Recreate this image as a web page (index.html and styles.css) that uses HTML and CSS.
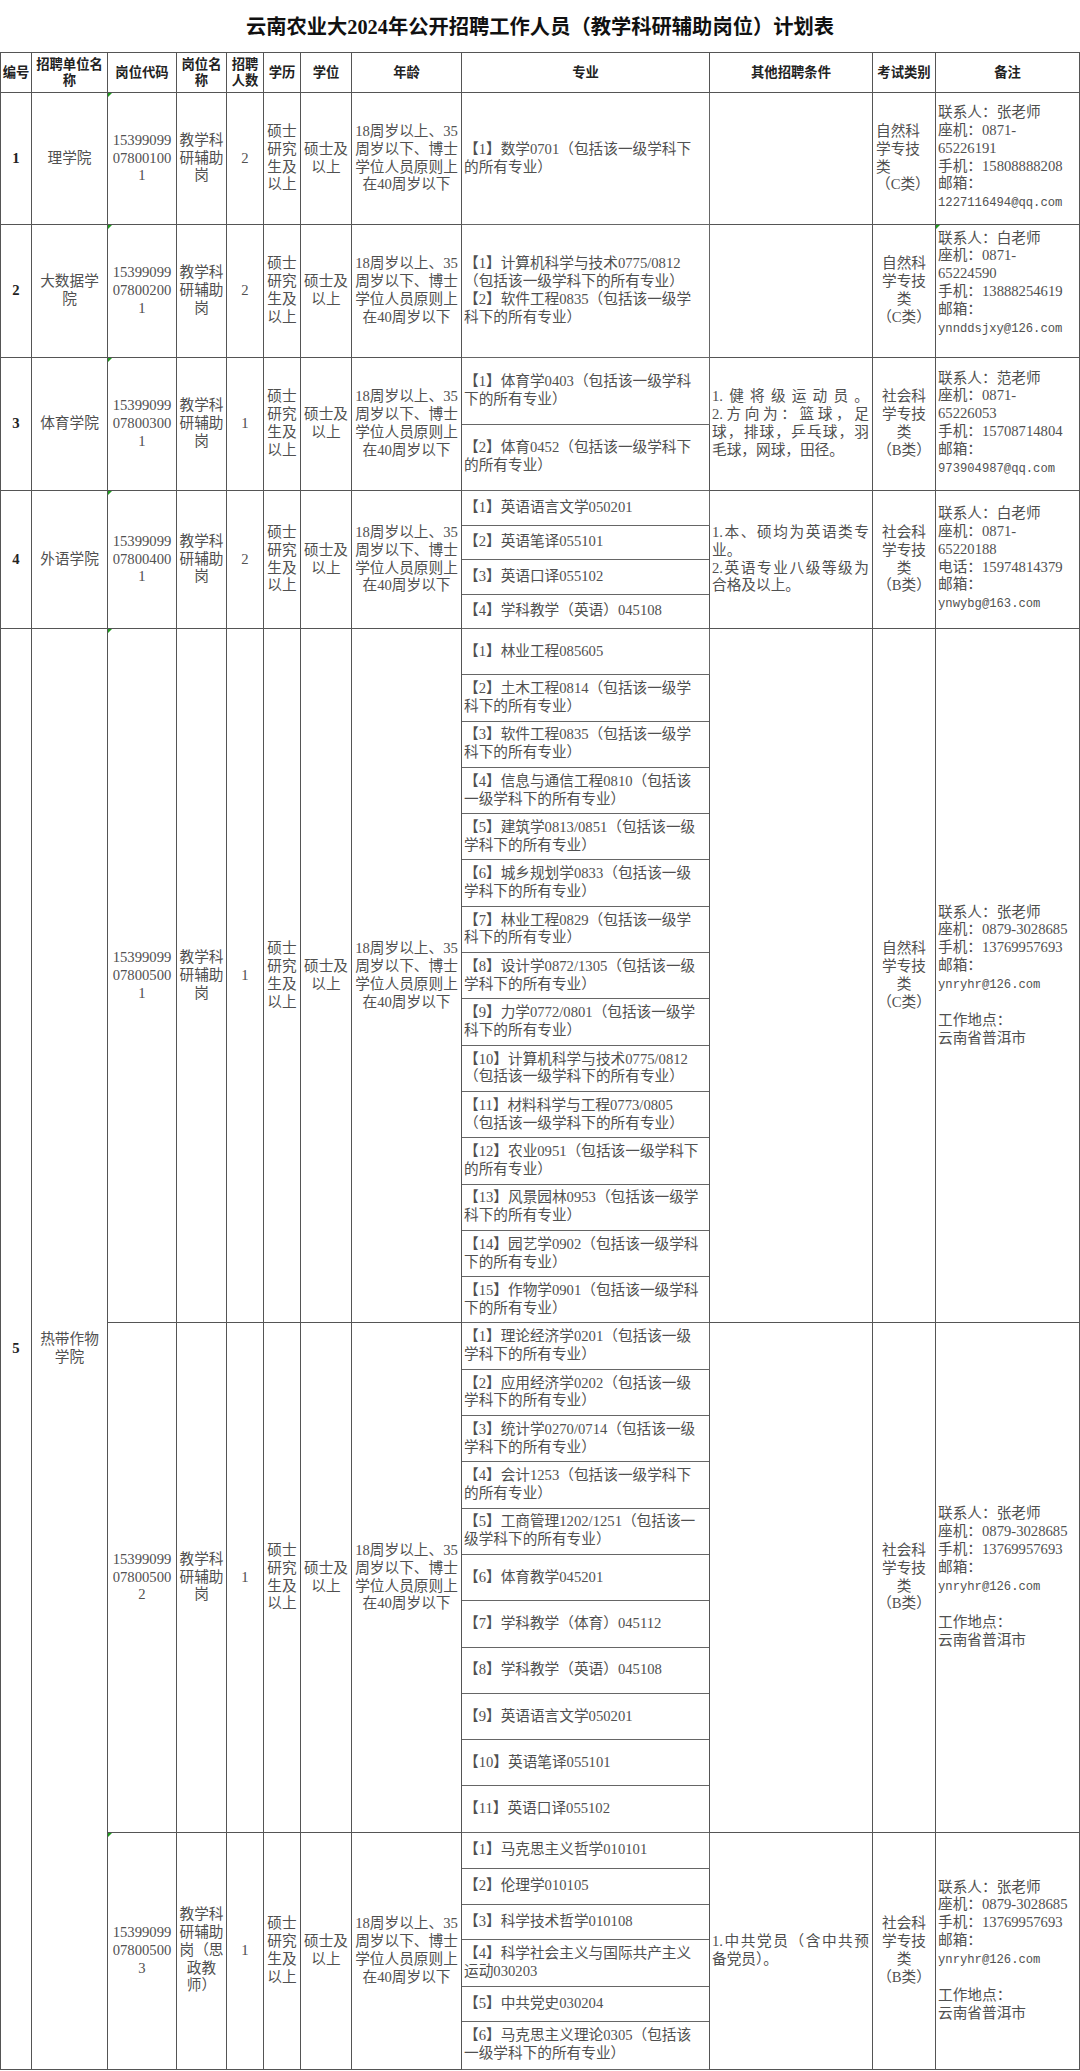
FILE: index.html
```html
<!DOCTYPE html>
<html lang="zh-CN">
<head>
<meta charset="utf-8">
<title>云南农业大2024年公开招聘工作人员（教学科研辅助岗位）计划表</title>
<link rel="stylesheet" href="styles.css">
</head>
<body>
<div class="title">云南农业大2024年公开招聘工作人员（教学科研辅助岗位）计划表</div>
<table class="plan">
<colgroup>
<col class="w-no"><col class="w-unit"><col class="w-code"><col class="w-name"><col class="w-num"><col class="w-edu"><col class="w-deg"><col class="w-age"><col class="w-major"><col class="w-other"><col class="w-exam"><col class="w-note">
</colgroup>
<thead>
<tr class="hd">
<th>编号</th><th>招聘单位名<br>称</th><th>岗位代码</th><th>岗位名<br>称</th><th>招聘<br>人数</th><th>学历</th><th>学位</th><th>年龄</th><th>专业</th><th>其他招聘条件</th><th>考试类别</th><th>备注</th>
</tr>
</thead>
<tbody>
<!-- 1 -->
<tr class="h132">
<td class="no">1</td>
<td>理学院</td>
<td class="flag">15399099<br>07800100<br>1</td>
<td>教学科<br>研辅助<br>岗</td>
<td>2</td>
<td>硕士<br>研究<br>生及<br>以上</td>
<td>硕士及<br>以上</td>
<td>18周岁以上、35<br>周岁以下、博士<br>学位人员原则上<br>在40周岁以下</td>
<td class="major">【1】数学0701（包括该一级学科下<br>的所有专业）</td>
<td class="other"></td>
<td class="left">自然科<br>学专技<br>类<br>（C类）</td>
<td class="note">联系人：张老师<br>座机：0871-<br>65226191<br>手机：15808888208<br>邮箱：<br><span class="mono">1227116494@qq.com</span></td>
</tr>
<!-- 2 -->
<tr class="h133">
<td class="no">2</td>
<td>大数据学<br>院</td>
<td class="flag">15399099<br>07800200<br>1</td>
<td>教学科<br>研辅助<br>岗</td>
<td>2</td>
<td>硕士<br>研究<br>生及<br>以上</td>
<td>硕士及<br>以上</td>
<td>18周岁以上、35<br>周岁以下、博士<br>学位人员原则上<br>在40周岁以下</td>
<td class="major">【1】计算机科学与技术0775/0812<br>（包括该一级学科下的所有专业）<br>【2】软件工程0835（包括该一级学<br>科下的所有专业）</td>
<td class="other"></td>
<td>自然科<br>学专技<br>类<br>（C类）</td>
<td class="note flag lift">联系人：白老师<br>座机：0871-<br>65224590<br>手机：13888254619<br>邮箱：<br><span class="mono">ynnddsjxy@126.com</span></td>
</tr>
<!-- 3 -->
<tr class="h665">
<td class="no" rowspan="2">3</td>
<td rowspan="2">体育学院</td>
<td class="flag" rowspan="2">15399099<br>07800300<br>1</td>
<td rowspan="2">教学科<br>研辅助<br>岗</td>
<td rowspan="2">1</td>
<td rowspan="2">硕士<br>研究<br>生及<br>以上</td>
<td rowspan="2">硕士及<br>以上</td>
<td rowspan="2">18周岁以上、35<br>周岁以下、博士<br>学位人员原则上<br>在40周岁以下</td>
<td class="major">【1】体育学0403（包括该一级学科<br>下的所有专业）</td>
<td class="other" rowspan="2"><div class="j">1.健将级运动员。</div><div class="j">2.方向为：篮球，足</div><div class="j">球，排球，乒乓球，羽</div><div>毛球，网球，田径。</div></td>
<td rowspan="2">社会科<br>学专技<br>类<br>（B类）</td>
<td class="note" rowspan="2">联系人：范老师<br>座机：0871-<br>65226053<br>手机：15708714804<br>邮箱：<br><span class="mono">973904987@qq.com</span></td>
</tr>
<tr class="h665"><td class="major">【2】体育0452（包括该一级学科下<br>的所有专业）</td></tr>
<!-- 4 -->
<tr class="h345">
<td class="no" rowspan="4">4</td>
<td rowspan="4">外语学院</td>
<td class="flag" rowspan="4">15399099<br>07800400<br>1</td>
<td rowspan="4">教学科<br>研辅助<br>岗</td>
<td rowspan="4">2</td>
<td rowspan="4">硕士<br>研究<br>生及<br>以上</td>
<td rowspan="4">硕士及<br>以上</td>
<td rowspan="4">18周岁以上、35<br>周岁以下、博士<br>学位人员原则上<br>在40周岁以下</td>
<td class="major">【1】英语语言文学050201</td>
<td class="other" rowspan="4"><div class="j">1.本、硕均为英语类专</div><div>业。</div><div class="j">2.英语专业八级等级为</div><div>合格及以上。</div></td>
<td rowspan="4">社会科<br>学专技<br>类<br>（B类）</td>
<td class="note" rowspan="4">联系人：白老师<br>座机：0871-<br>65220188<br>电话：15974814379<br>邮箱：<br><span class="mono">ynwybg@163.com</span></td>
</tr>
<tr class="h345"><td class="major">【2】英语笔译055101</td></tr>
<tr class="h345"><td class="major">【3】英语口译055102</td></tr>
<tr class="h345"><td class="major">【4】学科教学（英语）045108</td></tr>
<!-- 5a -->
<tr class="h463">
<td class="no" rowspan="32">5</td>
<td rowspan="32">热带作物<br>学院</td>
<td class="flag" rowspan="15">15399099<br>07800500<br>1</td>
<td rowspan="15">教学科<br>研辅助<br>岗</td>
<td rowspan="15">1</td>
<td rowspan="15">硕士<br>研究<br>生及<br>以上</td>
<td rowspan="15">硕士及<br>以上</td>
<td rowspan="15">18周岁以上、35<br>周岁以下、博士<br>学位人员原则上<br>在40周岁以下</td>
<td class="major">【1】林业工程085605</td>
<td class="other" rowspan="15"></td>
<td rowspan="15">自然科<br>学专技<br>类<br>（C类）</td>
<td class="note" rowspan="15">联系人：张老师<br>座机：0879-3028685<br>手机：13769957693<br>邮箱：<br><span class="mono">ynryhr@126.com</span><br><br>工作地点：<br>云南省普洱市</td>
</tr>
<tr class="h463"><td class="major">【2】土木工程0814（包括该一级学<br>科下的所有专业）</td></tr>
<tr class="h463"><td class="major">【3】软件工程0835（包括该一级学<br>科下的所有专业）</td></tr>
<tr class="h463"><td class="major">【4】信息与通信工程0810（包括该<br>一级学科下的所有专业）</td></tr>
<tr class="h463"><td class="major">【5】建筑学0813/0851（包括该一级<br>学科下的所有专业）</td></tr>
<tr class="h463"><td class="major">【6】城乡规划学0833（包括该一级<br>学科下的所有专业）</td></tr>
<tr class="h463"><td class="major">【7】林业工程0829（包括该一级学<br>科下的所有专业）</td></tr>
<tr class="h463"><td class="major">【8】设计学0872/1305（包括该一级<br>学科下的所有专业）</td></tr>
<tr class="h463"><td class="major">【9】力学0772/0801（包括该一级学<br>科下的所有专业）</td></tr>
<tr class="h463"><td class="major">【10】计算机科学与技术0775/0812<br>（包括该一级学科下的所有专业）</td></tr>
<tr class="h463"><td class="major">【11】材料科学与工程0773/0805<br>（包括该一级学科下的所有专业）</td></tr>
<tr class="h463"><td class="major">【12】农业0951（包括该一级学科下<br>的所有专业）</td></tr>
<tr class="h463"><td class="major">【13】风景园林0953（包括该一级学<br>科下的所有专业）</td></tr>
<tr class="h463"><td class="major">【14】园艺学0902（包括该一级学科<br>下的所有专业）</td></tr>
<tr class="h463"><td class="major">【15】作物学0901（包括该一级学科<br>下的所有专业）</td></tr>
<!-- 5b -->
<tr class="h463">
<td rowspan="11">15399099<br>07800500<br>2</td>
<td rowspan="11">教学科<br>研辅助<br>岗</td>
<td rowspan="11">1</td>
<td rowspan="11">硕士<br>研究<br>生及<br>以上</td>
<td rowspan="11">硕士及<br>以上</td>
<td rowspan="11">18周岁以上、35<br>周岁以下、博士<br>学位人员原则上<br>在40周岁以下</td>
<td class="major">【1】理论经济学0201（包括该一级<br>学科下的所有专业）</td>
<td class="other" rowspan="11"></td>
<td rowspan="11">社会科<br>学专技<br>类<br>（B类）</td>
<td class="note" rowspan="11">联系人：张老师<br>座机：0879-3028685<br>手机：13769957693<br>邮箱：<br><span class="mono">ynryhr@126.com</span><br><br>工作地点：<br>云南省普洱市</td>
</tr>
<tr class="h463"><td class="major">【2】应用经济学0202（包括该一级<br>学科下的所有专业）</td></tr>
<tr class="h463"><td class="major">【3】统计学0270/0714（包括该一级<br>学科下的所有专业）</td></tr>
<tr class="h463"><td class="major">【4】会计1253（包括该一级学科下<br>的所有专业）</td></tr>
<tr class="h463"><td class="major">【5】工商管理1202/1251（包括该一<br>级学科下的所有专业）</td></tr>
<tr class="h463"><td class="major">【6】体育教学045201</td></tr>
<tr class="h463"><td class="major">【7】学科教学（体育）045112</td></tr>
<tr class="h463"><td class="major">【8】学科教学（英语）045108</td></tr>
<tr class="h463"><td class="major">【9】英语语言文学050201</td></tr>
<tr class="h463"><td class="major">【10】英语笔译055101</td></tr>
<tr class="h463"><td class="major">【11】英语口译055102</td></tr>
<!-- 5c -->
<tr class="h36">
<td class="flag" rowspan="6">15399099<br>07800500<br>3</td>
<td rowspan="6">教学科<br>研辅助<br>岗（思<br>政教<br>师）</td>
<td rowspan="6">1</td>
<td rowspan="6">硕士<br>研究<br>生及<br>以上</td>
<td rowspan="6">硕士及<br>以上</td>
<td rowspan="6">18周岁以上、35<br>周岁以下、博士<br>学位人员原则上<br>在40周岁以下</td>
<td class="major">【1】马克思主义哲学010101</td>
<td class="other" rowspan="6"><div class="j">1.中共党员（含中共预</div><div>备党员）。</div></td>
<td rowspan="6">社会科<br>学专技<br>类<br>（B类）</td>
<td class="note" rowspan="6">联系人：张老师<br>座机：0879-3028685<br>手机：13769957693<br>邮箱：<br><span class="mono">ynryhr@126.com</span><br><br>工作地点：<br>云南省普洱市</td>
</tr>
<tr class="h36"><td class="major">【2】伦理学010105</td></tr>
<tr class="h35"><td class="major">【3】科学技术哲学010108</td></tr>
<tr class="h47"><td class="major">【4】科学社会主义与国际共产主义<br>运动030203</td></tr>
<tr class="h35"><td class="major">【5】中共党史030204</td></tr>
<tr class="h48"><td class="major">【6】马克思主义理论0305（包括该<br>一级学科下的所有专业）</td></tr>
</tbody>
</table>
</body>
</html>
```

FILE: styles.css
```css
html, body {
  margin: 0;
  padding: 0;
  background: #ffffff;
}

body {
  width: 1080px;
  font-family: "Liberation Serif", "Noto Sans CJK SC", serif;
  color: #505050;
}

.title {
  height: 52px;
  line-height: 54px;
  text-align: center;
  font-size: 20.3px;
  font-weight: bold;
  color: #111111;
}

.plan {
  border-collapse: collapse;
  table-layout: fixed;
  width: 1079px;
  font-size: 14.67px;
  line-height: 17.8px;
}

.w-no { width: 31px; }
.w-unit { width: 76px; }
.w-code { width: 69px; }
.w-name { width: 50px; }
.w-num { width: 37px; }
.w-edu { width: 37px; }
.w-deg { width: 51px; }
.w-age { width: 110px; }
.w-major { width: 248px; }
.w-other { width: 163px; }
.w-exam { width: 63px; }
.w-note { width: 144px; }

.plan th,
.plan td {
  border: 1px solid #555555;
  padding: 0 2px;
  text-align: center;
  vertical-align: middle;
  white-space: nowrap;
  overflow: hidden;
}

.plan th {
  font-family: "Liberation Serif", "Noto Sans CJK SC", serif;
  font-size: 13.33px;
  line-height: 15.4px;
  font-weight: bold;
  color: #222222;
  padding: 0 1px;
}

.hd { height: 40px; }
.h132 { height: 132px; }
.h133 { height: 133px; }
.h665 { height: 66.5px; }
.h345 { height: 34.5px; }
.h463 { height: 46.3px; }
.h36 { height: 36px; }
.h35 { height: 35px; }
.h47 { height: 47px; }
.h48 { height: 48px; }

.plan td.no {
  font-weight: bold;
  color: #222222;
}

.plan td.major {
  text-align: left;
  padding-left: 2px;
  border-color: #666666;
}

.plan td.other {
  white-space: normal;
  text-align: left;
  padding: 0 3px 0 2px;
}

.j {
  text-align: justify;
  text-align-last: justify;
}

.plan td.left {
  text-align: left;
  padding-left: 3px;
}

.plan td.note {
  text-align: left;
  padding-left: 2px;
}

.plan td.lift {
  padding-bottom: 14px;
}

.mono {
  font-family: "Liberation Mono", monospace;
  font-size: 12.2px;
}

.plan td.flag {
  position: relative;
}

.plan td.flag::before {
  content: "";
  position: absolute;
  left: 0;
  top: 0;
  width: 0;
  height: 0;
  border-top: 4px solid #1f9a1f;
  border-right: 4px solid transparent;
}
```
